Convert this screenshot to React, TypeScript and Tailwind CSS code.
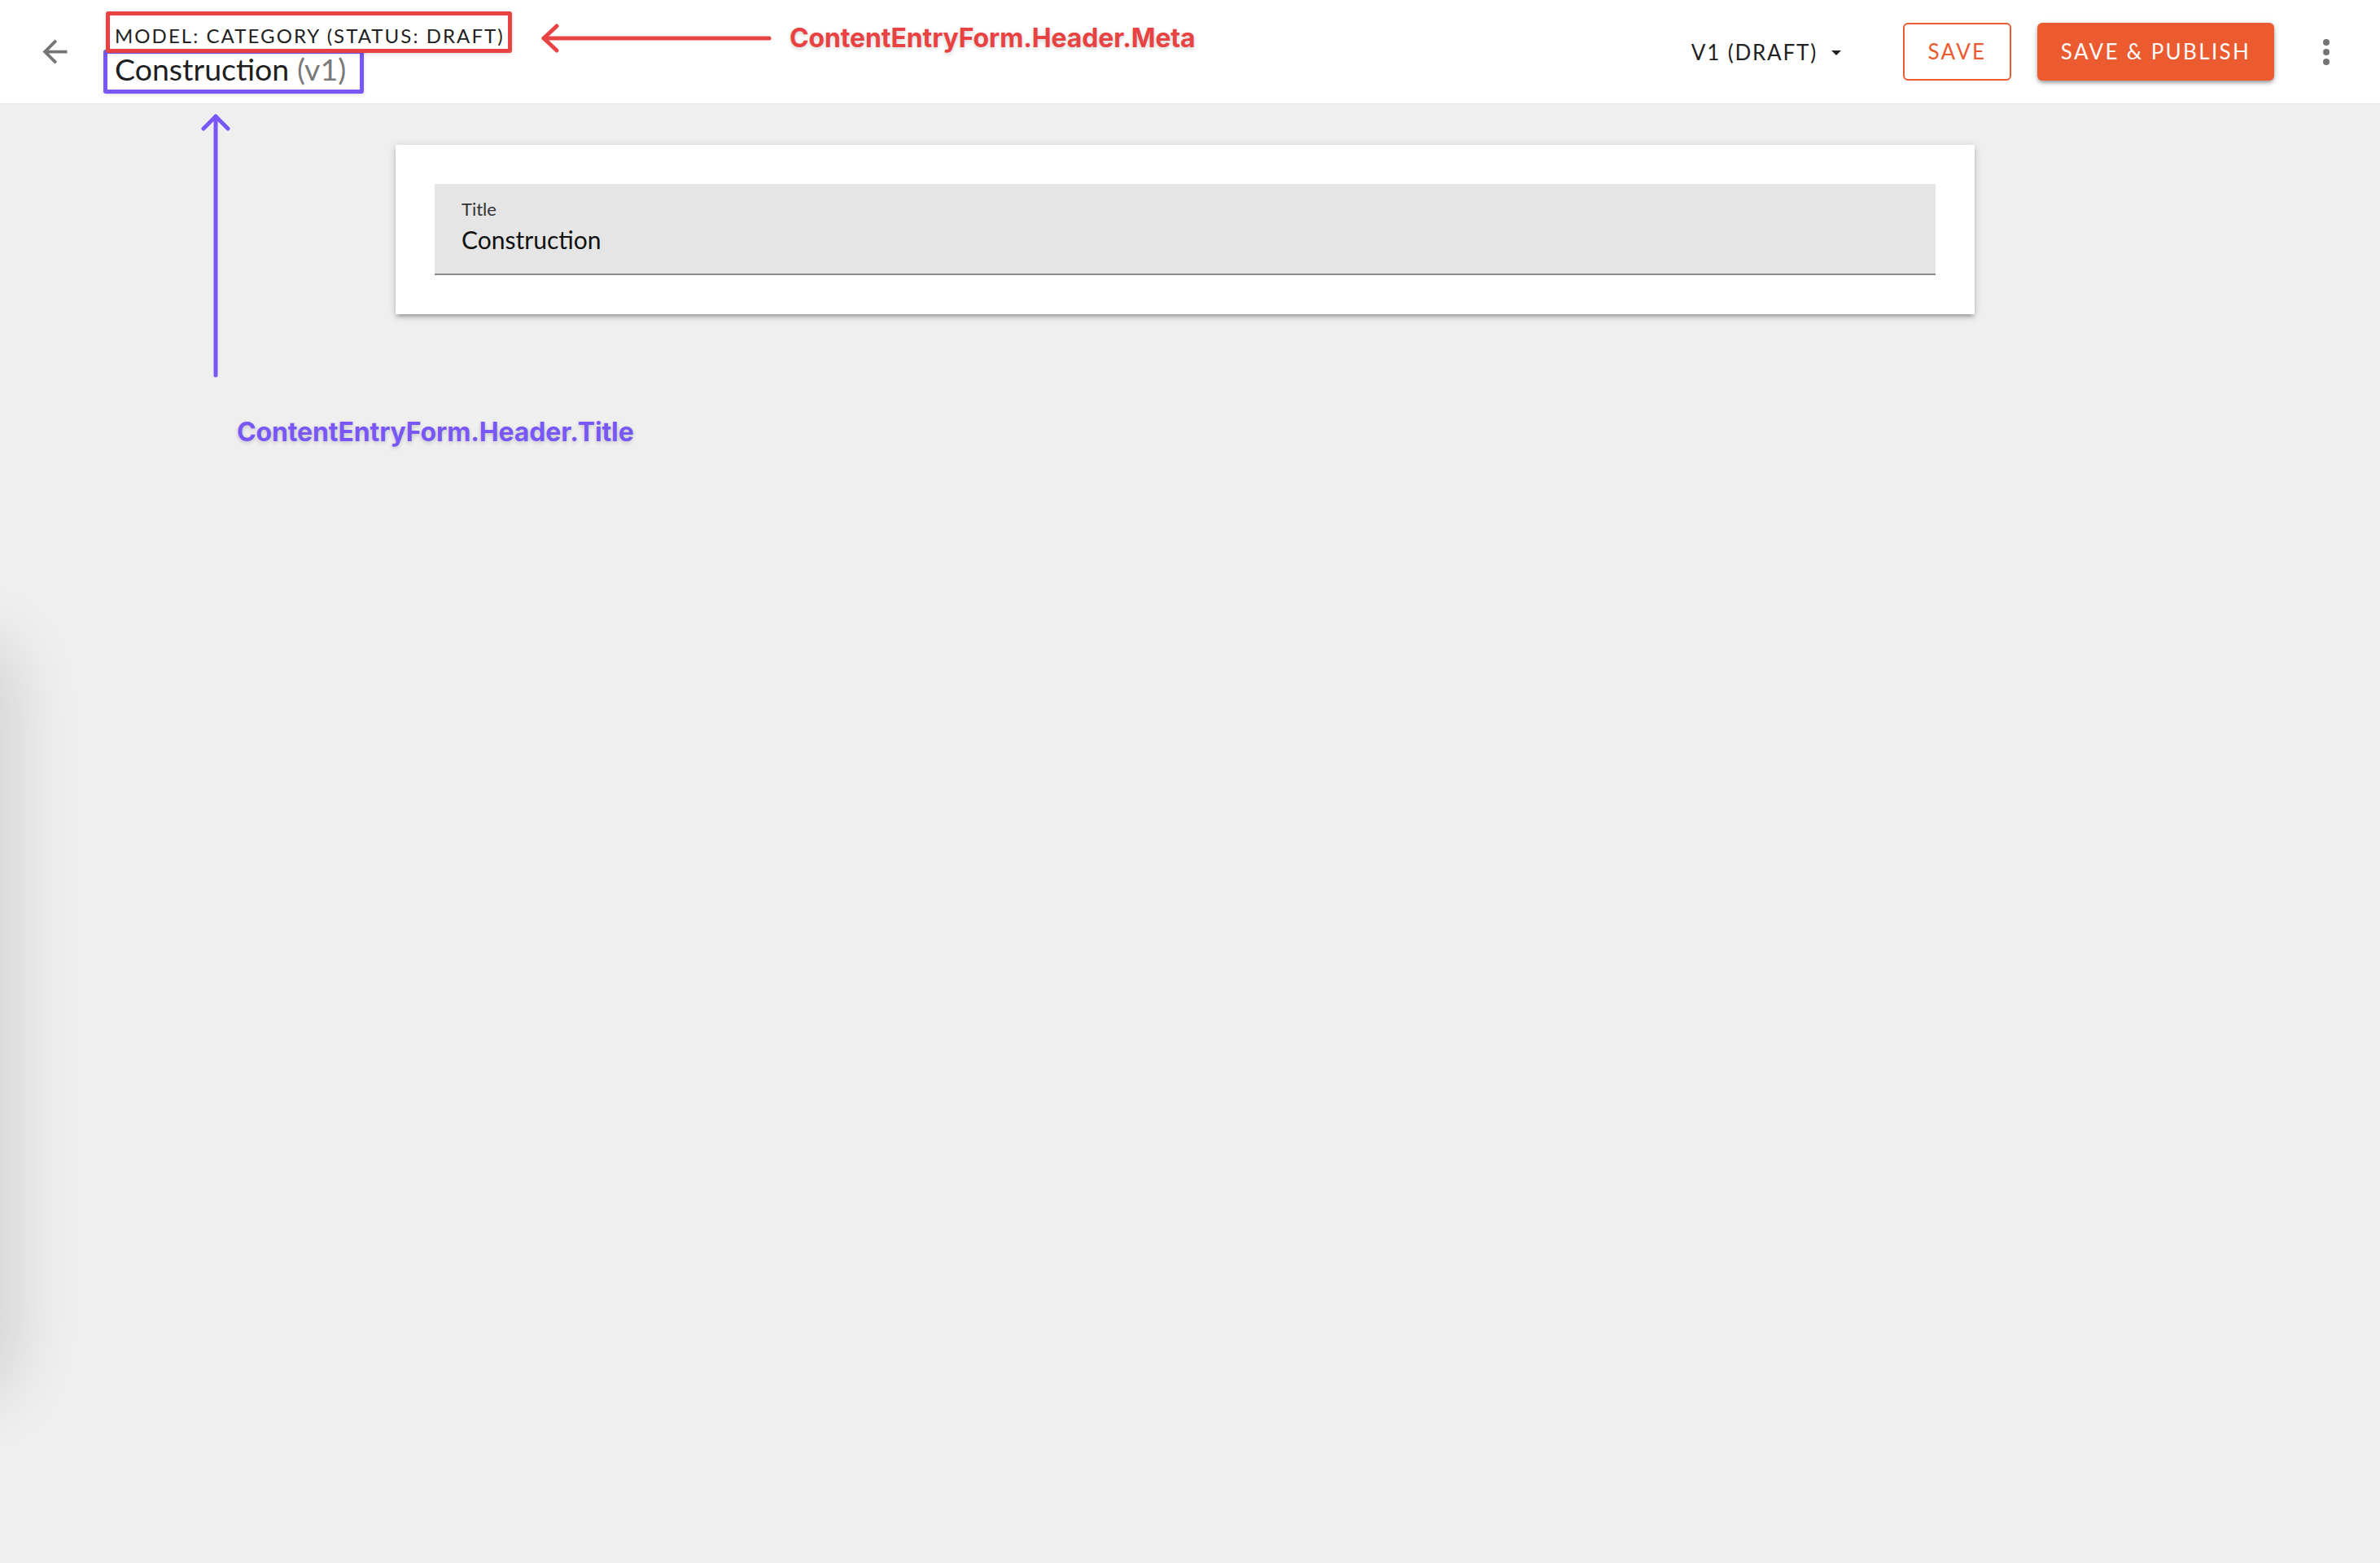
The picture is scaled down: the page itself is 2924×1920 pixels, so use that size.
import React from "react";

function BackArrow() {
  return (
    <svg viewBox="0 0 24 24" className="h-[45px] w-[45px]" fill="#757575">
      <path d="M20 11H7.83l5.59-5.59L12 4l-8 8 8 8 1.41-1.41L7.83 13H20v-2z" />
    </svg>
  );
}

function MoreVert() {
  return (
    <svg viewBox="0 0 24 24" className="h-[48px] w-[48px]" fill="#757575">
      <circle cx="12" cy="6" r="2" />
      <circle cx="12" cy="12" r="2" />
      <circle cx="12" cy="18" r="2" />
    </svg>
  );
}

export default function App() {
  return (
    <div className="relative min-h-[1920px] w-full overflow-hidden bg-[#efefef] font-['Lato',sans-serif]">
      {/* Header */}
      <header className="flex h-[128px] items-start border-b border-[#e4e4e4] bg-white">
        <button className="ml-[45px] mt-[41px] flex h-[45px] w-[45px] items-center justify-center">
          <BackArrow />
        </button>
        <div className="ml-[51px] flex flex-col pt-[30px]">
          <div className="text-[24px] leading-[28px] tracking-[0.086em] text-[#222]">
            MODEL: CATEGORY (STATUS: DRAFT)
          </div>
          <div className="mt-[5px] text-[37.5px] leading-[44px] text-[#1f1f1f]">
            Construction <span className="text-[#7a7a7a]">(v1)</span>
          </div>
        </div>
        <div className="ml-auto flex h-full items-center pr-[42px]">
          <div className="mt-[2px] flex items-center">
            <span className="text-[26px] tracking-[0.07em] text-[#222]">V1 (DRAFT)</span>
            <svg viewBox="0 0 12 6" className="ml-[17px] h-[6px] w-[12px]" fill="#222">
              <polygon points="0,0 12,0 6,6" />
            </svg>
          </div>
          <button className="ml-[76px] flex h-[71px] w-[133px] items-center justify-center rounded-[6px] border-2 border-[#ec5a30] bg-white text-[26px] tracking-[0.09em] text-[#ec5a30]">
            SAVE
          </button>
          <button className="ml-[32px] flex h-[71px] w-[291px] items-center justify-center rounded-[6px] bg-[#ec5a30] text-[26px] tracking-[0.09em] text-white shadow-[0_4px_6px_-2px_rgba(0,0,0,0.3),0_2px_4px_rgba(0,0,0,0.14),0_1px_8px_rgba(0,0,0,0.1)]">
            SAVE &amp; PUBLISH
          </button>
          <button className="ml-[40px] flex h-[48px] w-[48px] items-center justify-center">
            <MoreVert />
          </button>
        </div>
      </header>

      {/* Content */}
      <main className="pt-[50px]">
        <section className="ml-[486px] w-[1940px] bg-white p-[48px] shadow-[0_4px_4px_rgba(0,0,0,0.14),0_6px_2px_-4px_rgba(0,0,0,0.12),0_2px_10px_rgba(0,0,0,0.16)]">
          <div className="h-[112px] border-b-2 border-[#8a8a8a] bg-[#e5e5e5] pl-[33px] pt-[18px]">
            <div className="text-[22px] leading-[26px] text-[#333]">Title</div>
            <div className="mt-[6px] text-[30px] leading-[36px] text-[#111]">Construction</div>
          </div>
        </section>
      </main>

      {/* Left edge drawer shadow */}
      <div className="absolute left-[-80px] top-[800px] h-[900px] w-[80px] rounded-full shadow-[0_0_80px_20px_rgba(0,0,0,0.12)]" />

      {/* Annotation boxes */}
      <div className="absolute left-[127px] top-[61px] h-[54px] w-[320px] rounded-[3px] border-[5px] border-[#7857f6] shadow-[0_1px_4px_rgba(0,0,0,0.15)]" />
      <div className="absolute left-[130px] top-[14px] h-[51px] w-[499px] rounded-[3px] border-[5px] border-[#e84242] shadow-[0_1px_4px_rgba(0,0,0,0.15)]" />

      {/* Annotation arrows */}
      <svg className="pointer-events-none absolute left-0 top-0 h-[1920px] w-[2924px]" viewBox="0 0 2924 1920">
        <g stroke="#e84242" strokeWidth="5" strokeLinecap="round" strokeLinejoin="round" fill="none">
          <line x1="668" y1="47" x2="945" y2="47" />
          <polyline points="684,32 668,47 684,62" />
        </g>
        <g stroke="#7857f6" strokeWidth="5" strokeLinecap="round" strokeLinejoin="round" fill="none">
          <line x1="265" y1="143" x2="265" y2="461" />
          <polyline points="250,158 265,143 280,158" />
        </g>
      </svg>

      {/* Annotation labels */}
      <div className="absolute left-[970px] top-[27px] font-['Inter',sans-serif] text-[32px] font-bold leading-[40px] tracking-[-0.004em] text-[#e84242] [text-shadow:0_2px_5px_rgba(0,0,0,0.18)]">
        ContentEntryForm.Header.Meta
      </div>
      <div className="absolute left-[291px] top-[511px] font-['Inter',sans-serif] text-[32px] font-bold leading-[40px] tracking-[-0.004em] text-[#7857f6] [text-shadow:0_2px_5px_rgba(0,0,0,0.18)]">
        ContentEntryForm.Header.Title
      </div>
    </div>
  );
}
